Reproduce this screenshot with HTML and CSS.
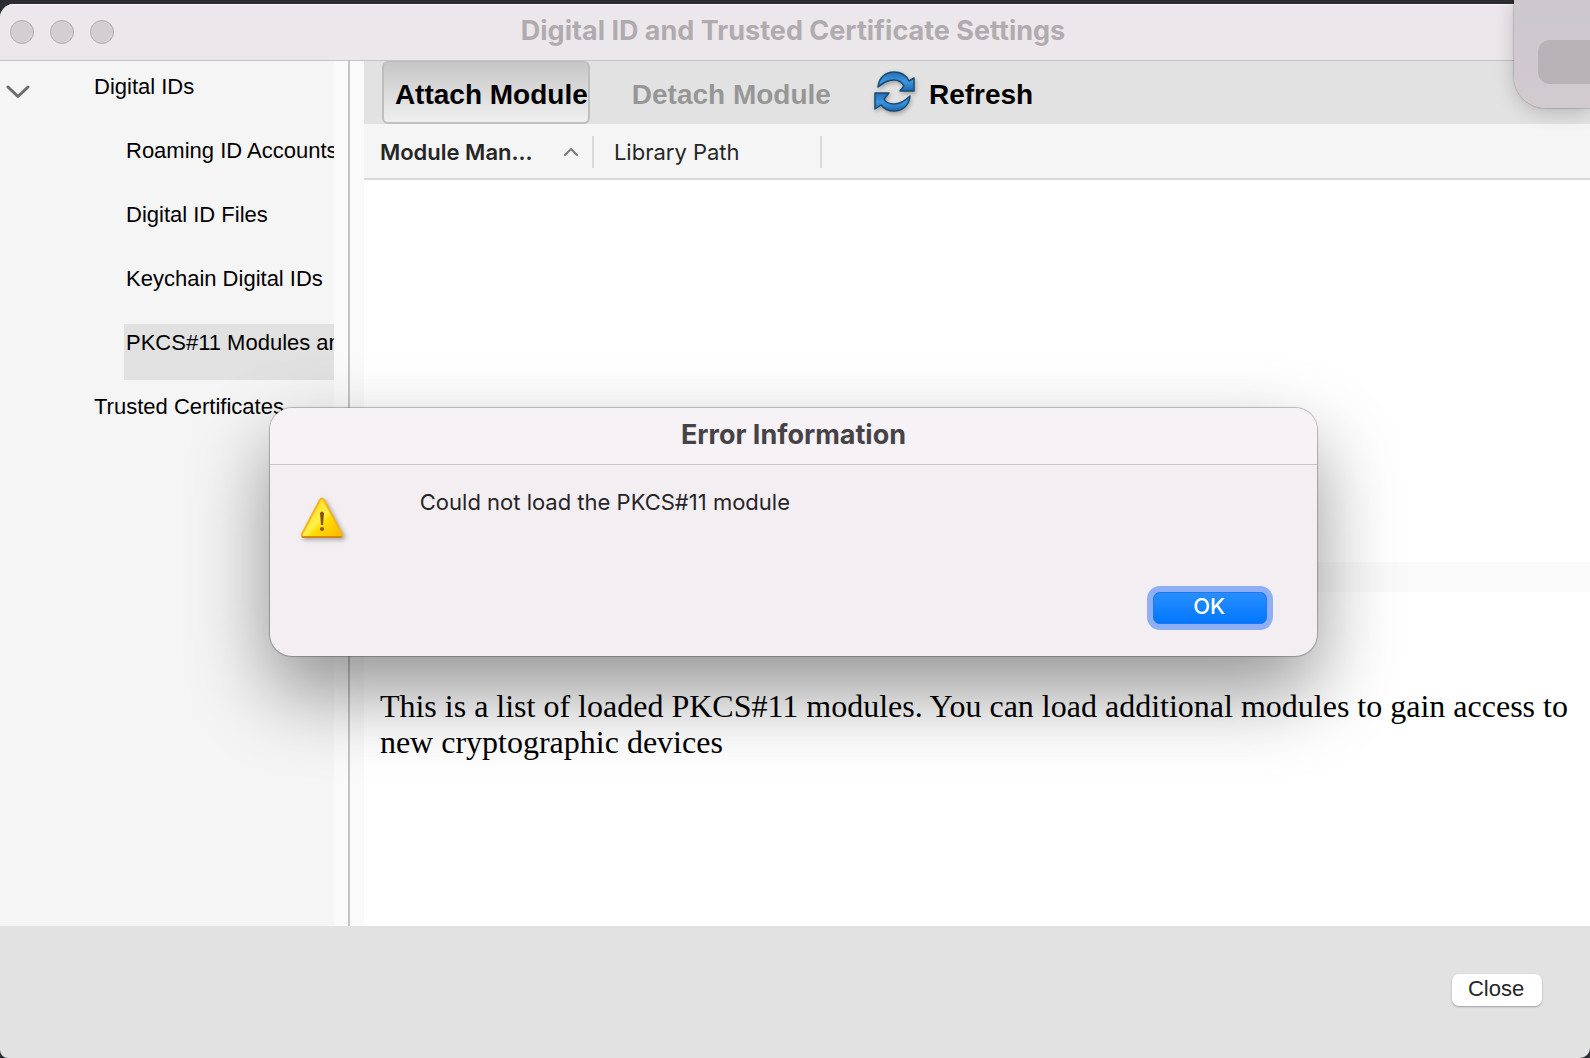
FILE: index.html
```html
<!DOCTYPE html>
<html lang="en">
<head>
    <meta charset="UTF-8">
    <meta name="viewport" content="width=device-width, initial-scale=1.0">
    <title>Digital ID and Trusted Certificate Settings</title>
    <link rel="stylesheet" href="styles.css">
</head>
<body>
    <div class="window">
        <header class="titlebar">
            <div class="lights">
                <button class="light" type="button" aria-label="Close window"></button>
                <button class="light" type="button" aria-label="Minimize window"></button>
                <button class="light" type="button" aria-label="Zoom window"></button>
            </div>
            <h1 class="window-title">Digital ID and Trusted Certificate Settings</h1>
        </header>

        <div class="content">
            <nav class="sidebar">
                <ul class="tree">
                    <li>
                        <div class="parent">
                            <button class="toggle" type="button" aria-label="Collapse Digital IDs" aria-expanded="true">
                                <svg width="24" height="14" viewBox="0 0 24 14"><path d="M2 2l10 9.500L22 2" fill="none" stroke="#6c6c6c" stroke-width="3" stroke-linecap="round" stroke-linejoin="round"/></svg>
                            </button>
                            <a class="node" href="#">Digital IDs</a>
                        </div>
                        <ul class="subtree">
                            <li><a class="node" href="#">Roaming ID Accounts</a></li>
                            <li><a class="node" href="#">Digital ID Files</a></li>
                            <li><a class="node" href="#">Keychain Digital IDs</a></li>
                            <li><a class="node selected" href="#">PKCS#11 Modules and Tokens</a></li>
                        </ul>
                    </li>
                    <li class="parent"><a class="node" href="#">Trusted Certificates</a></li>
                </ul>
            </nav>
            <div class="splitter"></div>

            <main class="main">
                <div class="toolbar">
                    <button class="tool active" type="button">Attach Module</button>
                    <button class="tool detach" type="button" disabled>Detach Module</button>
                    <button class="tool" type="button">
                        <svg class="refresh-icon" width="44" height="44" viewBox="0 0 44 44">
                            <defs>
                                <linearGradient id="blue" x1="0" y1="0" x2="0" y2="1">
                                    <stop offset="0" stop-color="#2a6db2"/>
                                    <stop offset="0.5" stop-color="#3a97e4"/>
                                    <stop offset="1" stop-color="#1f68ae"/>
                                </linearGradient>
                            </defs>
                            <g fill="url(#blue)" stroke="#174a70" stroke-width="1.5" stroke-linejoin="round">
                                <path d="M5 16C6 6 13 1 21 1c7 0 12 3 15 9l5-3v13H27l4-5c-2-4-6-6-10-6-7 0-11 3-16 7z"/>
                                <path d="M37 25c-1 10-8 15-16 15-6 0-10-2-13-6l-6 4V22h14l-5 6c2 4 6 5 10 5 6 0 11-3 16-8z"/>
                            </g>
                        </svg>
                        Refresh
                    </button>
                </div>
                <table class="modules">
                    <thead>
                        <tr>
                            <th class="col-name" aria-sort="ascending">
                                <div class="cell">
                                    Module Man...
                                    <svg width="16" height="10" viewBox="0 0 16 10"><path d="M2 8l6-6 6 6" fill="none" stroke="#7a7a7a" stroke-width="2" stroke-linecap="round" stroke-linejoin="round"/></svg>
                                </div>
                            </th>
                            <th class="col-path"><div class="cell">Library Path</div></th>
                            <th></th>
                        </tr>
                    </thead>
                </table>
                <div class="list"></div>
                <div class="divider"></div>
                <section class="info">
                    <p>This is a list of loaded PKCS#11 modules. You can load additional modules to gain access to new cryptographic devices</p>
                </section>
            </main>
        </div>

        <footer class="footer">
            <button class="close-btn" type="button">Close</button>
        </footer>
    </div>

    <div class="popover"><div class="popover-field"></div></div>

    <div class="overlay">
        <div class="dialog" role="alertdialog" aria-labelledby="dialog-title" aria-describedby="dialog-text">
            <h2 class="dialog-title" id="dialog-title">Error Information</h2>
            <div class="dialog-body">
                <svg class="warning" width="44" height="44" viewBox="0 0 44 44">
                    <defs>
                        <linearGradient id="yellow" x1="0" y1="0" x2="1" y2="1">
                            <stop offset="0.2" stop-color="#ffdf20"/>
                            <stop offset="0.5" stop-color="#fff04a"/>
                            <stop offset="0.6" stop-color="#ffdc00"/>
                            <stop offset="1" stop-color="#fcb400"/>
                        </linearGradient>
                    </defs>
                    <path d="M20 4q2-3 4 0l18 34q1 3-2 3H4q-3 0-2-3z" fill="url(#yellow)" stroke="#f5b41c" stroke-width="2" stroke-linejoin="round"/>
                    <path d="M3 41h38" stroke="#d08a12" stroke-width="2" stroke-linecap="round"/>
                    <path d="M20 17q2-3 4 0l-1 12h-2z" fill="#8a5208"/>
                    <circle cx="22" cy="33" r="2" fill="#8a5208"/>
                </svg>
                <p class="message" id="dialog-text">Could not load the PKCS#11 module</p>
            </div>
            <div class="dialog-actions">
                <button class="ok-btn" type="button">OK</button>
            </div>
        </div>
    </div>
</body>
</html>
```
FILE: styles.css
```css
* {
    box-sizing: border-box;
}

body {
    margin: 0;
    padding-top: 4px;
    height: 100vh;
    overflow: hidden;
    background: #2b2d30;
    font-family: "Liberation Sans", Arial, sans-serif;
    font-size: 22px;
    color: #000;
}

button {
    font-family: inherit;
    border: none;
    padding: 0;
    background: none;
    color: inherit;
}

a {
    color: inherit;
    text-decoration: none;
}

ul {
    list-style: none;
    margin: 0;
    padding: 0;
}

svg {
    display: block;
    flex: none;
}

.window {
    display: flex;
    flex-direction: column;
    height: 100%;
    overflow: hidden;
    border-radius: 14px 0 10px 8px;
    background: #e2e2e2;
}

/* title bar */
.titlebar {
    display: grid;
    grid-template-columns: 1fr auto 1fr;
    align-items: center;
    height: 57px;
    padding: 0 14px 2px 10px;
    background: #ece7eb;
    border-top: 1px solid #f8f5f7;
    border-bottom: 1px solid #c4c2c4;
}

.lights {
    display: flex;
    gap: 16px;
}

.light {
    width: 24px;
    height: 24px;
    border-radius: 50%;
    background: #d4ced3;
    border: 1px solid #b3adb2;
}

.window-title {
    margin: 0;
    padding-bottom: 2px;
    font-family: Inter, sans-serif;
    font-size: 27px;
    line-height: 32px;
    font-weight: 700;
    color: #b0abaf;
}

.content {
    display: flex;
    flex: 1;
    min-height: 0;
}

/* sidebar tree */
.sidebar {
    width: 21%;
    overflow: hidden;
    padding-top: 7px;
    background: #f5f5f5;
}

.parent {
    display: flex;
    padding-left: 92px;
}

.toggle {
    height: 48px;
    margin-left: -86px;
    margin-right: 62px;
}

.node {
    display: block;
    height: 56px;
    margin-bottom: 8px;
    padding-left: 2px;
    line-height: 38px;
    white-space: nowrap;
}

.subtree {
    padding-left: 124px;
}

.selected {
    background: #e1e1e1;
}

.splitter {
    width: 30px;
    background: linear-gradient(to right, #fafafa 14px, #c4c4c4 14px, #c4c4c4 16px, #fafafa 16px);
}

/* right side */
.main {
    display: flex;
    flex-direction: column;
    flex: 1;
    min-width: 0;
    background: #fff;
}

.toolbar {
    display: flex;
    height: 63px;
    padding-left: 18px;
    background: #e2e2e2;
}

.tool {
    display: flex;
    align-items: center;
    gap: 12px;
    padding: 4px 0 0;
    font-size: 28px;
    font-weight: 700;
    white-space: nowrap;
}

.active {
    padding: 5px 0 0 11px;
    border: 2px solid #bebebe;
    border-top-width: 1px;
    border-radius: 6px;
    background: linear-gradient(#c6c6c6, #efefef);
}

.detach {
    margin: 0 42px;
    color: #969696;
}

.refresh-icon {
    margin-bottom: 4px;
    filter: drop-shadow(1px 2px 2px rgba(0, 0, 0, 0.3));
}

.modules {
    width: 100%;
    table-layout: fixed;
    border-collapse: collapse;
    background: #f5f5f5;
    border-bottom: 2px solid #d9d9d9;
    font-family: Inter, sans-serif;
    color: #262626;
}

.modules th {
    height: 55px;
    padding: 2px 0 0;
    text-align: left;
    font-weight: 400;
}

.modules .col-name {
    width: 230px;
    font-weight: 600;
}

.modules .col-path {
    width: 228px;
}

.cell {
    display: flex;
    justify-content: space-between;
    align-items: center;
    height: 32px;
    padding: 0 13px 0 16px;
    border-right: 2px solid #dadada;
}

.col-path .cell {
    padding-left: 20px;
}

.list {
    flex: 382;
}

.divider {
    height: 30px;
    background: #fafafa;
}

.info {
    flex: 334;
    padding: 0 16px;
}

.info p {
    margin: 96px 0 0;
    font-family: "Liberation Serif", "Times New Roman", serif;
    font-size: 32px;
    line-height: 36px;
}

.footer {
    display: flex;
    justify-content: flex-end;
    align-items: center;
    height: 132px;
    padding: 0 48px 4px;
}

.close-btn {
    width: 90px;
    height: 32px;
    padding: 0 2px 3px 0;
    border-radius: 7px;
    background: #fff;
    box-shadow: 0 1px 2px rgba(0, 0, 0, 0.3);
    font-size: 22px;
    color: #262626;
}

/* panel hanging over the top right corner */
.popover {
    position: absolute;
    top: 0;
    right: 0;
    width: 76px;
    height: 108px;
    padding: 40px 0 0 24px;
    border-radius: 0 0 0 32px;
    background: linear-gradient(#cdc7ce, #d1cbd0);
    box-shadow: 0 0 1px 1px rgba(0, 0, 0, 0.15), 0 4px 20px rgba(0, 0, 0, 0.2);
}

.popover-field {
    height: 44px;
    border-radius: 12px 0 0 12px;
    background: #b8b2b7;
}

/* error dialog */
.overlay {
    position: absolute;
    inset: 0;
    display: flex;
    justify-content: center;
    align-items: center;
    padding: 6px 3px 0 0;
}

.dialog {
    width: 66%;
    border-radius: 22px;
    background: #f3eef2;
    box-shadow: 0 0 1px 1px rgba(0, 0, 0, 0.25), 0 36px 80px rgba(0, 0, 0, 0.42);
    font-family: Inter, sans-serif;
}

.dialog-title {
    margin: 0;
    height: 57px;
    border-bottom: 1px solid #c8c4c7;
    border-radius: 22px 22px 0 0;
    background: #f7f2f6;
    text-align: center;
    font-size: 27px;
    line-height: 54px;
    font-weight: 700;
    color: #464347;
}

.dialog-body {
    display: flex;
    gap: 76px;
    padding: 23px 30px 0;
}

.warning {
    margin-top: 8px;
    filter: drop-shadow(2px 2px 2px rgba(0, 0, 0, 0.3));
}

.message {
    margin: 0;
    line-height: 28px;
    color: #262427;
}

.dialog-actions {
    display: flex;
    justify-content: flex-end;
    padding: 52px 50px 32px;
}

.ok-btn {
    width: 114px;
    height: 32px;
    padding: 0 2px 4px 0;
    border-radius: 7px;
    background: linear-gradient(#2a8fff, #0076ff);
    box-shadow: inset 0 0 0 1px #1c78ee, 0 0 0 6px #8eaff5;
    font-size: 22px;
    font-weight: 500;
    color: #fff;
}
```
